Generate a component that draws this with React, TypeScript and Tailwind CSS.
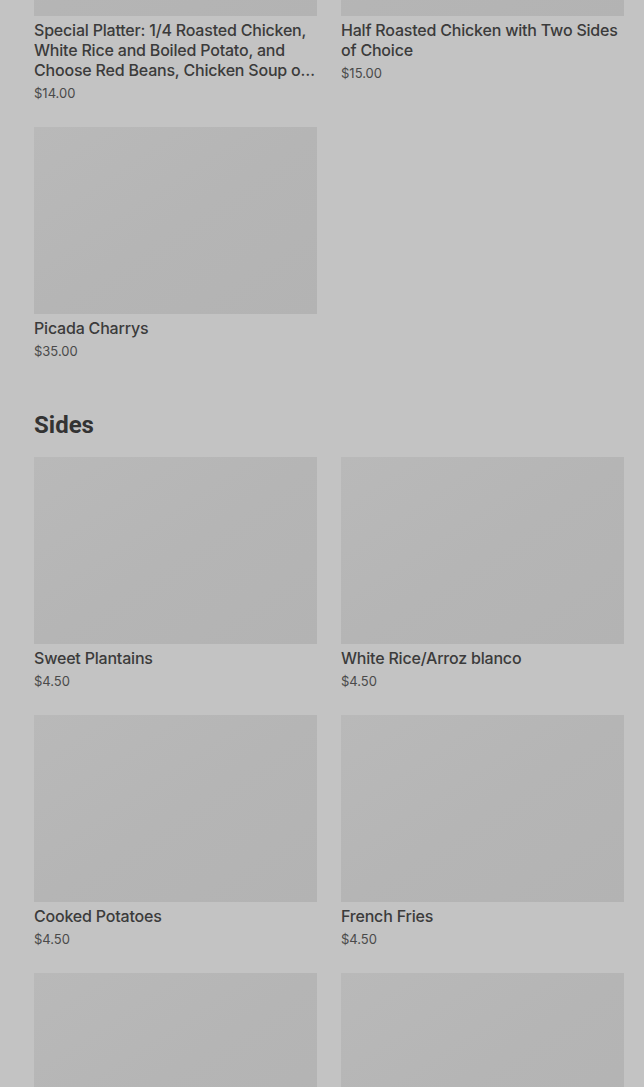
import type { ReactNode } from 'react';

type Item = { name: string; price: string };

const topItems: Item[] = [
  { name: 'Special Platter: 1/4 Roasted Chicken, White Rice and Boiled Potato, and Choose Red Beans, Chicken Soup or Salad', price: '$14.00' },
  { name: 'Half Roasted Chicken with Two Sides of Choice', price: '$15.00' },
  { name: 'Picada Charrys', price: '$35.00' },
];

const sides: Item[] = [
  { name: 'Sweet Plantains', price: '$4.50' },
  { name: 'White Rice/Arroz blanco', price: '$4.50' },
  { name: 'Cooked Potatoes', price: '$4.50' },
  { name: 'French Fries', price: '$4.50' },
  { name: 'Red Beans', price: '$4.50' },
  { name: 'Salad', price: '$4.50' },
];

function Placeholder() {
  return (
    <div className="h-[187px] w-full bg-gradient-to-br from-[#b9b9b9] via-[#b5b5b5] to-[#b3b3b3]" />
  );
}

function Card({ item }: { item: Item }) {
  return (
    <div className="flex flex-col">
      <Placeholder />
      <div className="mt-1 line-clamp-3 text-[16px] font-medium leading-5 tracking-[-0.2px] text-[#3b3b3b]">{item.name}</div>
      <div className="mt-[3px] text-[13px] leading-5 text-[#4a4a4a]">{item.price}</div>
    </div>
  );
}

function Grid({ children }: { children: ReactNode }) {
  return <div className="grid grid-cols-2 gap-x-6 gap-y-6">{children}</div>;
}

export default function App() {
  return (
    <div
      className="min-h-screen overflow-hidden bg-[#c3c3c3] pl-[34px] pr-5"
      style={{ fontFamily: 'Inter, "Liberation Sans", sans-serif' }}
    >
      <div className="-mt-[171px]">
        <Grid>
          {topItems.map((it) => (
            <Card key={it.name} item={it} />
          ))}
        </Grid>
        <h2
          className="mt-12 mb-4 text-[24px] font-bold leading-8 text-[#333333]"
          style={{ fontFamily: 'Roboto, "Liberation Sans", sans-serif' }}
        >
          Sides
        </h2>
        <Grid>
          {sides.map((it) => (
            <Card key={it.name} item={it} />
          ))}
        </Grid>
      </div>
    </div>
  );
}
